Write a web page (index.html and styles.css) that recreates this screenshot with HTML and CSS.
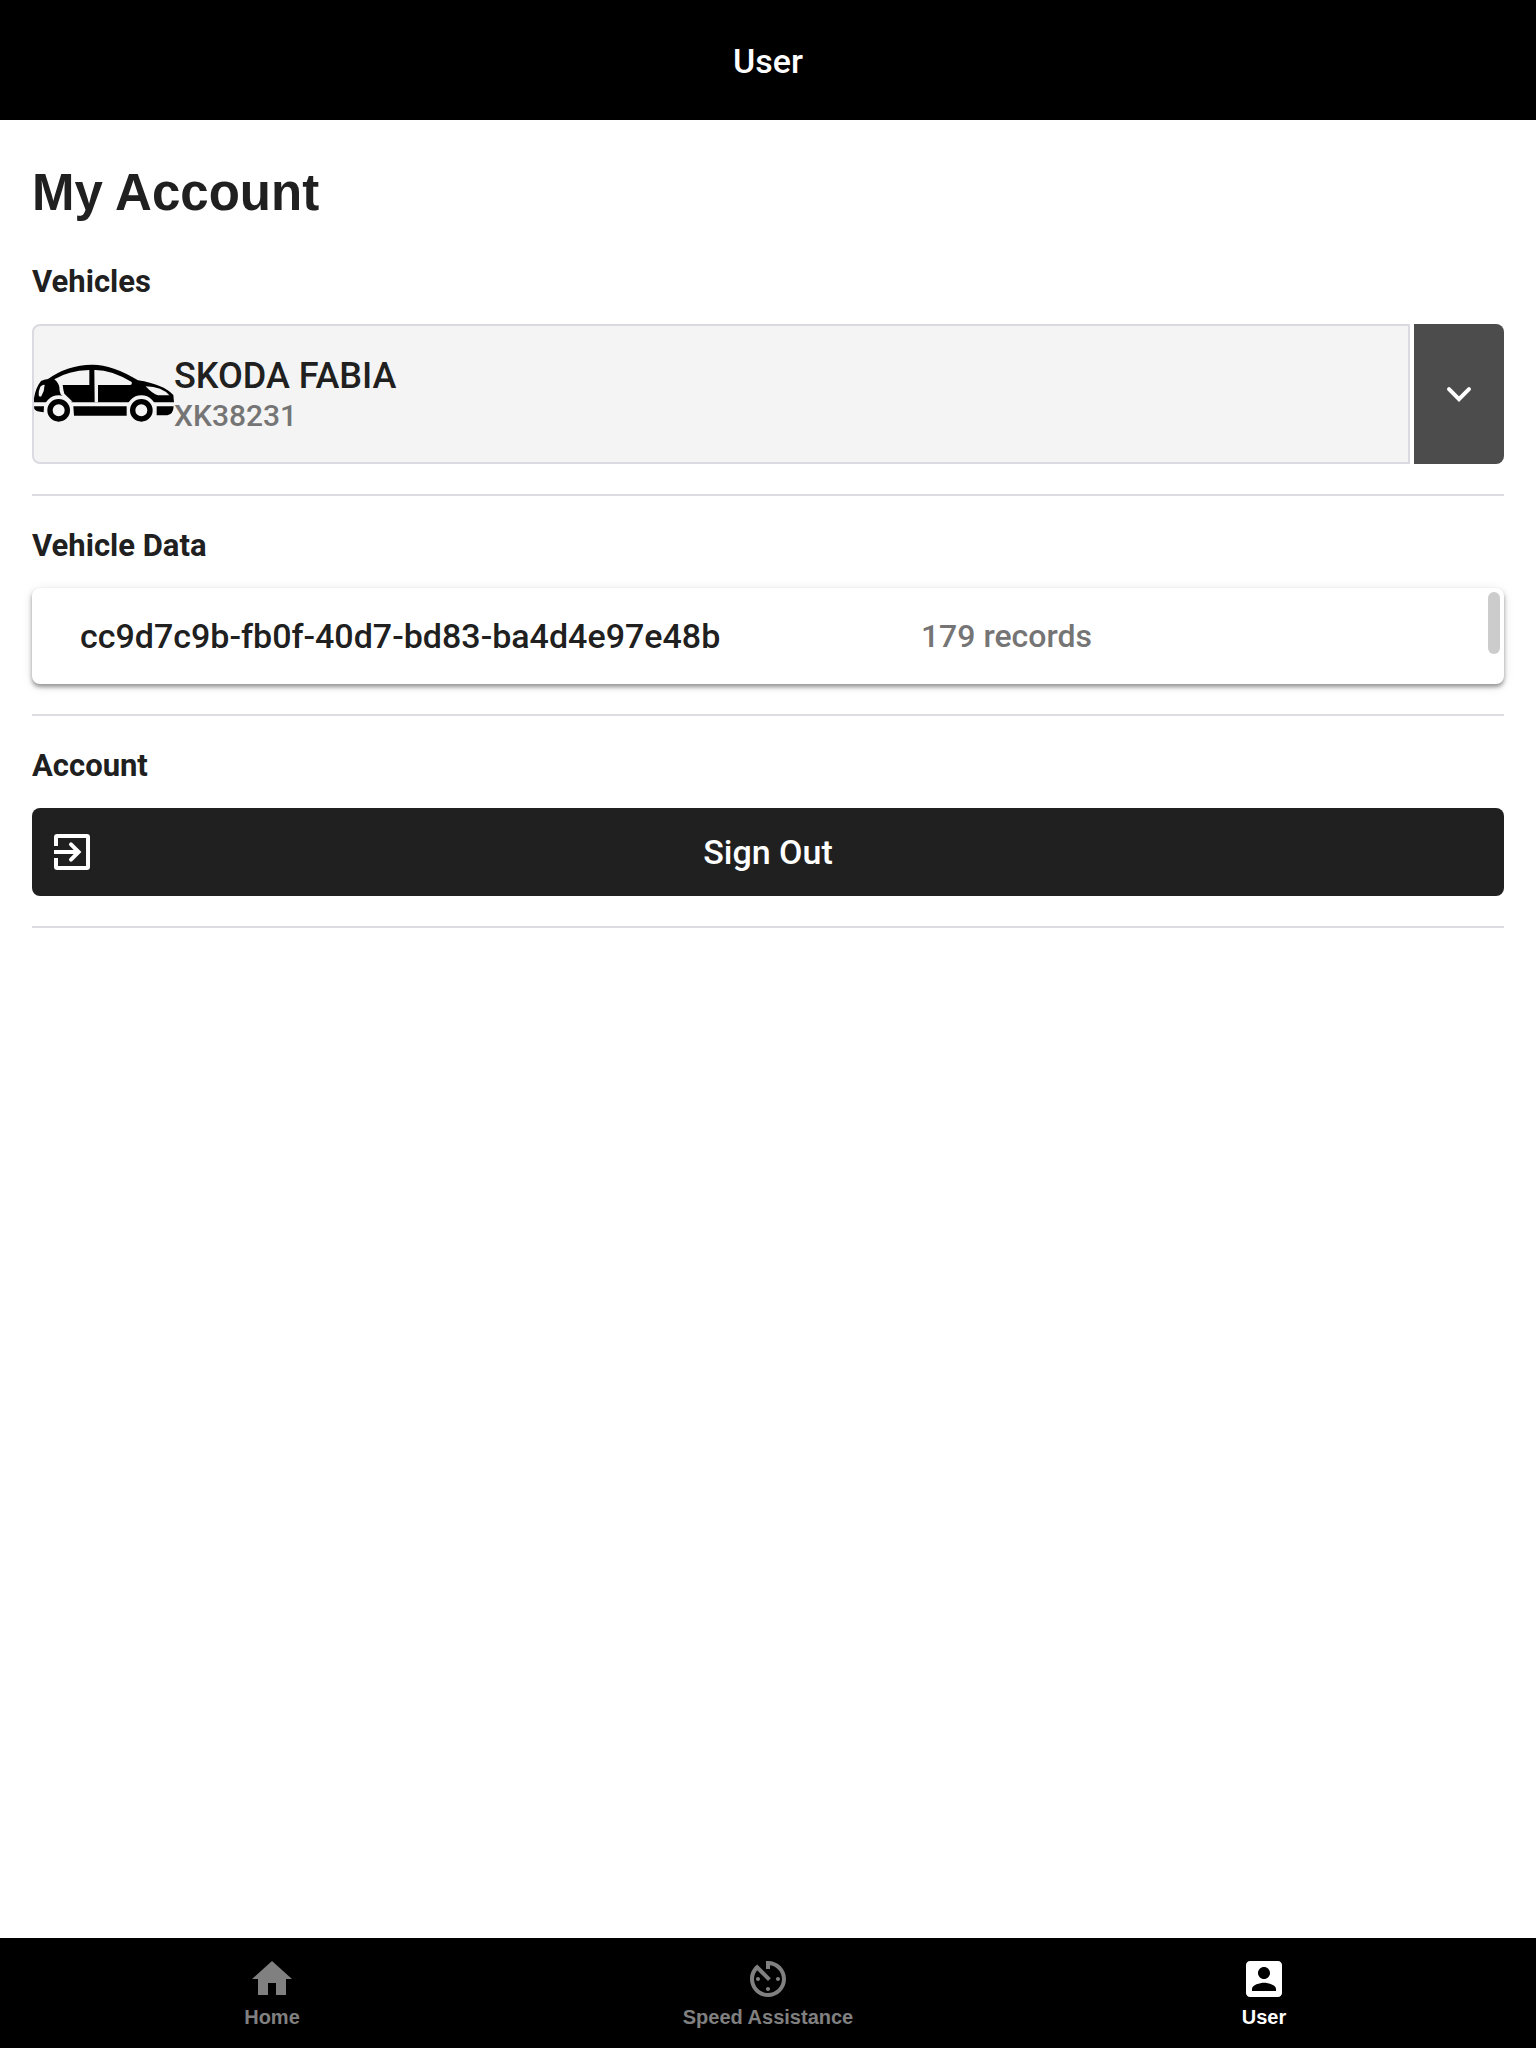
FILE: index.html
```html
<!DOCTYPE html>
<html lang="en">
<head>
<meta charset="utf-8">
<meta name="viewport" content="width=device-width, initial-scale=1">
<title>User</title>
<link rel="stylesheet" href="styles.css">
</head>
<body>
<header class="topbar">User</header>
<main class="content">
  <h1 class="page-title">My Account</h1>
  <section class="section">
    <h2 class="section-title">Vehicles</h2>
    <div class="picker">
      <div class="vehicle">
        <svg class="car" viewBox="12 12 420 210" aria-hidden="true">
          <path d="M12 142V130Q16 100 33 78Q42 73 54 72Q112 30 186 29Q246 28 324 76Q400 88 430 120L432 142Z"/>
          <g class="cutout">
            <path d="M73 73Q114 47 178 45V90H98Q100 108 103 116L128 140H116L92 118Q88 110 88 96Q86 84 73 73Z"/>
            <path d="M193 45Q244 44 305 81Q307 90 300 90H204V142H194Z"/>
            <path d="M347 94Q397 96 418 121H384Q368 117 347 94Z"/>
            <path d="M31 95Q39 88 44 90Q43 110 34 124Q28 127 26 121Q25 107 31 95Z"/>
            <circle cx="86" cy="166" r="45"/>
            <circle cx="334" cy="166" r="45"/>
          </g>
          <path d="M12 154H42L41 172Q18 170 13 162ZM130 154H290V182H132ZM380 154H431Q430 178 412 181H380Z"/>
          <path fill-rule="evenodd" d="M52 166a34 34 0 1 0 68 0a34 34 0 1 0-68 0ZM68 166a18 18 0 1 1 36 0a18 18 0 1 1-36 0ZM300 166a34 34 0 1 0 68 0a34 34 0 1 0-68 0ZM316 166a18 18 0 1 1 36 0a18 18 0 1 1-36 0Z"/>
        </svg>
        <div class="vehicle-text">
          <div class="vehicle-name">SKODA FABIA</div>
          <div class="vehicle-plate">XK38231</div>
        </div>
      </div>
      <button class="picker-toggle" type="button" aria-label="Choose vehicle">
        <svg class="icon" viewBox="0 0 24 24"><path d="M7 9.600l5 5 5-5" fill="none" stroke="currentColor" stroke-width="2" stroke-linecap="round"/></svg>
      </button>
    </div>
  </section>
  <section class="section">
    <h2 class="section-title">Vehicle Data</h2>
    <div class="data-card">
      <span class="data-id">cc9d7c9b-fb0f-40d7-bd83-ba4d4e97e48b</span>
      <span class="data-count">179 records</span>
      <span class="scroll-thumb"></span>
    </div>
  </section>
  <section class="section">
    <h2 class="section-title">Account</h2>
    <button class="sign-out" type="button">
      <svg class="icon" viewBox="0 0 24 24" fill="none" stroke="currentColor" stroke-width="2"><path d="M4 9V4.6Q4 4 4.600 4H19.400Q20 4 20 4.600V19.400Q20 20 19.400 20H4.600Q4 20 4 19.400V15"/><path d="M3 12H15"/><path d="M11.500 8.200L15.300 12L11.500 15.800" stroke-linecap="round"/></svg>
      <span>Sign Out</span>
    </button>
  </section>
</main>
<nav class="tabs">
  <a class="tab" href="#home">
    <svg class="icon" viewBox="0 0 24 24" fill="currentColor"><path d="M10 20v-6h4v6h5v-8h3L12 3 2 12h3v8z"/></svg>
    <span>Home</span>
  </a>
  <a class="tab" href="#speed">
    <svg class="icon" viewBox="0 0 24 24" fill="currentColor"><path d="M11 17c0 .55.45 1 1 1s1-.45 1-1-.45-1-1-1-1 .45-1 1zm0-14v4h2V5.080c3.390.490 6 3.390 6 6.920 0 3.870-3.130 7-7 7s-7-3.130-7-7c0-1.680.590-3.220 1.580-4.420L12 13l1.410-1.410-6.800-6.800v.020C4.420 6.450 3 9.050 3 12c0 4.970 4.020 9 9 9 4.970 0 9-4.030 9-9s-4.030-9-9-9h-1zm7 9c0-.55-.45-1-1-1s-1 .45-1 1 .45 1 1 1 1-.45 1-1zM6 12c0 .55.45 1 1 1s1-.45 1-1-.45-1-1-1-1 .45-1 1z"/></svg>
    <span>Speed Assistance</span>
  </a>
  <a class="tab tab-active" href="#user" aria-current="page">
    <svg class="icon" viewBox="0 0 24 24" fill="currentColor"><path d="M3 5v14c0 1.100.890 2 2 2h14c1.100 0 2-.900 2-2V5c0-1.100-.900-2-2-2H5c-1.110 0-2 .900-2 2zm12 4c0 1.660-1.340 3-3 3s-3-1.340-3-3 1.340-3 3-3 3 1.340 3 3zm-9 8c0-2 4-3.100 6-3.100s6 1.100 6 3.100v1H6v-1z"/></svg>
    <span>User</span>
  </a>
</nav>
</body>
</html>
```

FILE: styles.css
```css
* {
  box-sizing: border-box;
}

body {
  margin: 0;
  min-height: 100vh;
  display: flex;
  flex-direction: column;
  background: #fff;
  color: #202020;
  font-family: Roboto, "Liberation Sans", sans-serif;
  font-weight: 500;
}

button {
  border: 0;
  font: inherit;
  cursor: pointer;
}

.icon {
  display: block;
  width: 48px;
  height: 48px;
  flex: none;
}

.topbar {
  padding: 41px 32px 39px;
  background: #000;
  color: #fff;
  font-size: 34px;
  line-height: 40px;
  text-align: center;
}

.content {
  flex: 1;
  padding: 0 32px;
}

.page-title {
  margin: 0;
  padding: 41px 0 7px;
  font-family: "Liberation Sans", sans-serif;
  font-size: 51px;
  font-weight: 700;
  line-height: 64px;
}

.section {
  padding-bottom: 30px;
  border-bottom: 2px solid #dcdce1;
}

.section-title {
  margin: 0;
  padding: 33px 0 25px;
  font-size: 31px;
  font-weight: 700;
  line-height: 34px;
}

.picker {
  display: flex;
  gap: 4px;
}

.vehicle {
  flex: 1;
  display: flex;
  align-items: center;
  height: 140px;
  border: 2px solid #dadae0;
  border-radius: 8px 0 0 8px;
  background: #f4f4f4;
}

.car {
  width: 140px;
  height: 70px;
  fill: #000;
}

.cutout {
  fill: #f4f4f4;
}

.vehicle-text {
  padding-top: 4px;
}

.vehicle-name {
  font-size: 36px;
  line-height: 40px;
}

.vehicle-plate {
  color: #757575;
  font-size: 30px;
  line-height: 40px;
}

.picker-toggle {
  display: flex;
  align-items: center;
  justify-content: center;
  width: 90px;
  border-radius: 0 8px 8px 0;
  background: #4c4c4c;
  color: #fff;
}

.data-card {
  position: relative;
  display: grid;
  grid-template-columns: 11fr 7fr;
  padding: 28px 48px;
  border-radius: 8px;
  background: #fff;
  box-shadow: 0 3px 4px rgba(0, 0, 0, 0.38), 0 2px 12px rgba(0, 0, 0, 0.1);
  font-size: 34px;
  line-height: 40px;
}

.data-count {
  color: #757575;
  font-size: 32px;
}

.scroll-thumb {
  position: absolute;
  top: 4px;
  right: 4px;
  width: 12px;
  height: 62px;
  border-radius: 6px;
  background: #ccc;
}

.sign-out {
  display: grid;
  grid-template-columns: 48px 1fr 48px;
  align-items: center;
  width: 100%;
  padding: 20px 16px;
  border-radius: 8px;
  background: #202020;
  color: #fff;
  font-size: 34px;
  line-height: 40px;
}

.tabs {
  display: flex;
  padding: 17px 24px;
  background: #000;
}

.tab {
  flex: 1;
  display: flex;
  flex-direction: column;
  align-items: center;
  color: #808080;
  font-family: "Liberation Sans", sans-serif;
  font-size: 20px;
  font-weight: 700;
  line-height: 28px;
  text-decoration: none;
}

.tab-active {
  color: #fff;
}
```
